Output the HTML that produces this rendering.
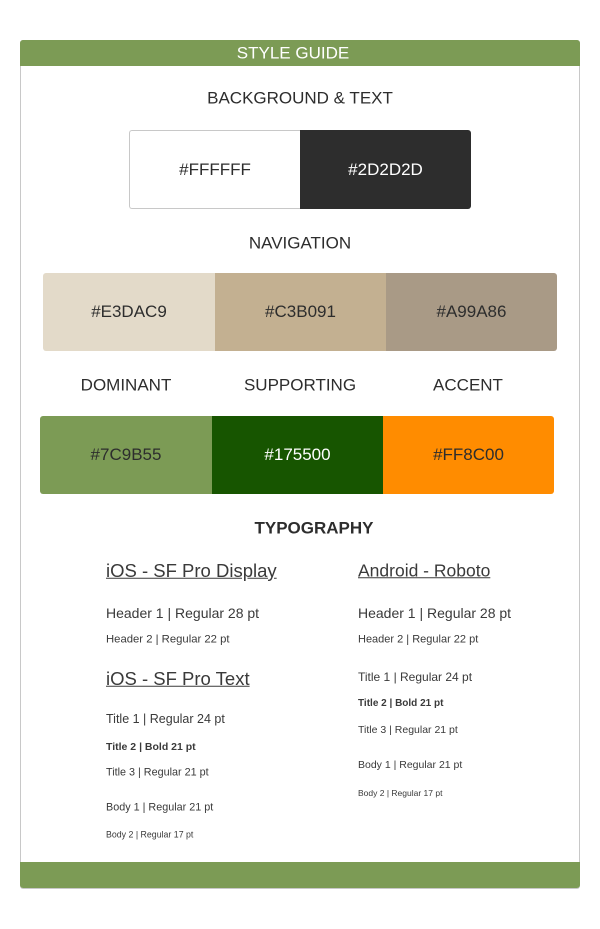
<!DOCTYPE html><html><head><style>
body{margin:0;width:600px;height:929px;background:#fff;font-family:"Liberation Sans",sans-serif;color:#2d2d2d;position:relative;overflow:hidden}
.a{position:absolute;white-space:nowrap;line-height:1}
.c{transform:translate(-50%,-50%)}
.l{transform:translateY(-50%);color:#3a3a3a}
.sw{position:absolute;display:flex;align-items:center;justify-content:center;font-size:17px}
</style></head><body>
<div style="position:absolute;left:20px;top:40px;width:558px;height:847px;border:1px solid #c8c8c8;border-radius:3px"></div>
<div style="position:absolute;left:20px;top:40px;width:560px;height:26px;background:#7c9b55;border-radius:3px 3px 0 0"></div>
<div class="a c" style="left:293px;top:53px;color:#fff;font-size:17px">STYLE GUIDE</div>
<div style="position:absolute;left:20px;top:862px;width:560px;height:26px;background:#7c9b55;border-radius:0 0 3px 3px"></div>
<div class="a c" style="left:300px;top:98px;font-size:17px">BACKGROUND &amp; TEXT</div>
<div class="sw" style="left:129px;top:130px;width:170px;height:77px;border:1px solid #c8c8c8;border-right:none;border-radius:3px 0 0 3px">#FFFFFF</div>
<div class="sw" style="left:300px;top:130px;width:171px;height:79px;background:#2d2d2d;color:#fff;border-radius:0 3px 3px 0">#2D2D2D</div>
<div class="a c" style="left:300px;top:243px;font-size:17px">NAVIGATION</div>
<div class="sw" style="left:43px;top:273px;width:172px;height:78px;background:#e3dac9;border-radius:3px 0 0 3px">#E3DAC9</div>
<div class="sw" style="left:215px;top:273px;width:171px;height:78px;background:#c3b091">#C3B091</div>
<div class="sw" style="left:386px;top:273px;width:171px;height:78px;background:#a99a86;border-radius:0 3px 3px 0">#A99A86</div>
<div class="a c" style="left:126px;top:385px;font-size:17px">DOMINANT</div>
<div class="a c" style="left:300px;top:385px;font-size:17px">SUPPORTING</div>
<div class="a c" style="left:468px;top:385px;font-size:17px">ACCENT</div>
<div class="sw" style="left:40px;top:416px;width:172px;height:78px;background:#7c9b55;border-radius:3px 0 0 3px">#7C9B55</div>
<div class="sw" style="left:212px;top:416px;width:171px;height:78px;background:#175500;color:#fff">#175500</div>
<div class="sw" style="left:383px;top:416px;width:171px;height:78px;background:#ff8c00;border-radius:0 3px 3px 0">#FF8C00</div>
<div class="a c" style="left:314px;top:528px;font-size:17px;font-weight:bold">TYPOGRAPHY</div>
<div class="a l" style="left:106px;top:571px;font-size:18.5px;text-decoration:underline">iOS - SF Pro Display</div>
<div class="a l" style="left:106px;top:613px;font-size:14px">Header 1 | Regular 28 pt</div>
<div class="a l" style="left:106px;top:640px;font-size:11.3px">Header 2 | Regular 22 pt</div>
<div class="a l" style="left:106px;top:679px;font-size:18.5px;text-decoration:underline">iOS - SF Pro Text</div>
<div class="a l" style="left:106px;top:719px;font-size:12.5px">Title 1 | Regular 24 pt</div>
<div class="a l" style="left:106px;top:747px;font-size:10.5px;font-weight:bold">Title 2 | Bold 21 pt</div>
<div class="a l" style="left:106px;top:773px;font-size:10.8px">Title 3 | Regular 21 pt</div>
<div class="a l" style="left:106px;top:808px;font-size:10.8px">Body 1 | Regular 21 pt</div>
<div class="a l" style="left:106px;top:835px;font-size:8.8px">Body 2 | Regular 17 pt</div>
<div class="a l" style="left:358px;top:571px;font-size:17.5px;text-decoration:underline">Android - Roboto</div>
<div class="a l" style="left:358px;top:613px;font-size:14px">Header 1 | Regular 28 pt</div>
<div class="a l" style="left:358px;top:640px;font-size:11px">Header 2 | Regular 22 pt</div>
<div class="a l" style="left:358px;top:677px;font-size:12px">Title 1 | Regular 24 pt</div>
<div class="a l" style="left:358px;top:704px;font-size:10px;font-weight:bold">Title 2 | Bold 21 pt</div>
<div class="a l" style="left:358px;top:730px;font-size:10.5px">Title 3 | Regular 21 pt</div>
<div class="a l" style="left:358px;top:765px;font-size:10.5px">Body 1 | Regular 21 pt</div>
<div class="a l" style="left:358px;top:793px;font-size:8.5px">Body 2 | Regular 17 pt</div>
</body></html>
